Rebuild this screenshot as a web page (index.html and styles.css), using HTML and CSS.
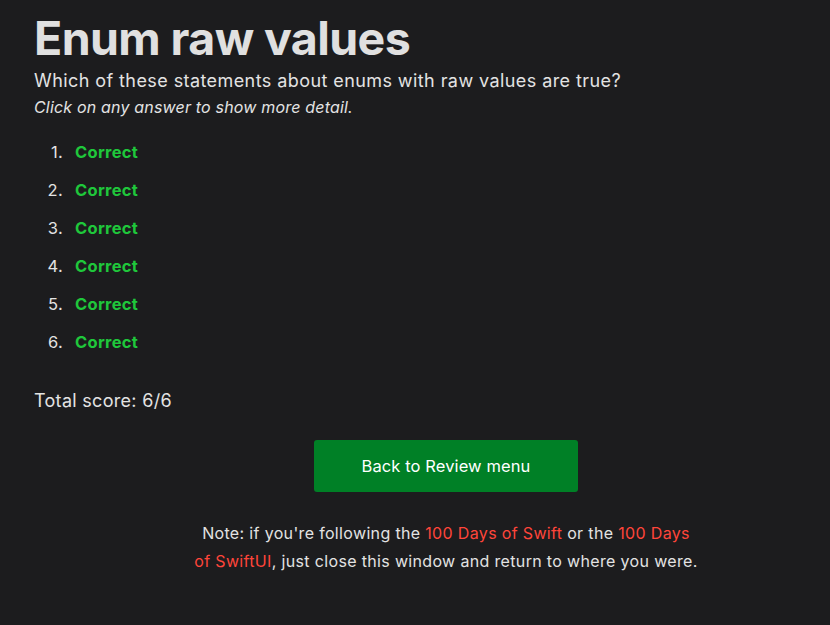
FILE: index.html
```html
<!DOCTYPE html>
<html>
<head>
<meta charset="utf-8">
<link rel="stylesheet" href="styles.css">
</head>
<body>
<main class="page">
  <div class="content">
    <h1 class="title">Enum raw values</h1>
    <p class="question">Which of these statements about enums with raw values are true?</p>
    <p class="hint">Click on any answer to show more detail.</p>
    <ol class="answers">
      <li><span class="correct">Correct</span></li>
      <li><span class="correct">Correct</span></li>
      <li><span class="correct">Correct</span></li>
      <li><span class="correct">Correct</span></li>
      <li><span class="correct">Correct</span></li>
      <li><span class="correct">Correct</span></li>
    </ol>
    <p class="score">Total score: 6/6</p>
    <div class="actions">
      <a class="button" href="#">Back to Review menu</a>
    </div>
    <p class="note">Note: if you're following the <a href="#">100 Days of Swift</a> or the <a href="#">100 Days of SwiftUI</a>, just close this window and return to where you were.</p>
  </div>
</main>
</body>
</html>
```
FILE: styles.css
```css
html, body {
  margin: 0;
  padding: 0;
  background: #1c1c1e;
  overflow: hidden;
}
body {
  font-family: Inter, "Liberation Sans", sans-serif;
  color: #e3e3e3;
  width: 830px;
  height: 625px;
}
.page {
  padding-left: 34px;
}
.content {
  width: 824px;
}
.title {
  margin: 10px 0 0;
  font-size: 46.5px;
  font-weight: 700;
  line-height: 56px;
  letter-spacing: -0.6px;
  color: #e0e0e0;
}
.question {
  margin: 2px 0 0;
  font-size: 18px;
  line-height: 26px;
  letter-spacing: 0.42px;
}
.hint {
  margin: 2px 0 0;
  font-size: 16px;
  font-style: italic;
  line-height: 22px;
  letter-spacing: 0.18px;
}
.answers {
  margin: 22px 0 0;
  padding: 0;
  list-style: none;
  counter-reset: item;
  font-size: 16.5px;
  line-height: 24px;
}
.answers li {
  display: flex;
  margin-bottom: 14px;
  counter-increment: item;
}
.answers li::before {
  content: counter(item) ".";
  width: 29px;
  margin-right: 12px;
  text-align: right;
  color: #e3e3e3;
  letter-spacing: 0.3px;
}
.correct {
  color: #1fc73b;
  font-weight: 700;
  letter-spacing: 0.3px;
}
.score {
  margin: 34px 0 0;
  font-size: 18px;
  line-height: 26px;
  letter-spacing: 0.3px;
}
.actions {
  display: flex;
  justify-content: center;
  margin-top: 26px;
}
.button {
  display: flex;
  align-items: center;
  justify-content: center;
  width: 264px;
  height: 52px;
  background: #008026;
  color: #ffffff;
  border-radius: 3px;
  text-decoration: none;
  font-size: 16.5px;
  letter-spacing: 0.1px;
}
.note {
  margin: 27px auto 0;
  max-width: 506px;
  text-align: center;
  font-size: 16px;
  line-height: 28px;
  letter-spacing: 0.34px;
}
.note a {
  color: #ff453a;
  text-decoration: none;
}
```
